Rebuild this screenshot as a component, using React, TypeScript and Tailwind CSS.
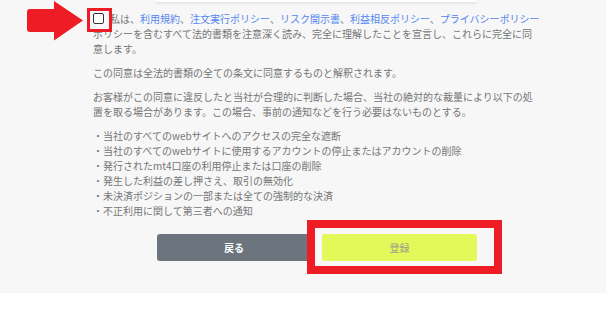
import React from 'react';

const links = ['利用規約', '注文実行ポリシー', 'リスク開示書', '利益相反ポリシー', 'プライバシーポリシー'];

const bullets = [
  '当社のすべてのwebサイトへのアクセスの完全な遮断',
  '当社のすべてのwebサイトに使用するアカウントの停止またはアカウントの削除',
  '発行されたmt4口座の利用停止または口座の削除',
  '発生した利益の差し押さえ、取引の無効化',
  '未決済ポジションの一部または全ての強制的な決済',
  '不正利用に関して第三者への通知',
];

const RedArrow: React.FC = () => (
  <svg width="57" height="41" viewBox="0 0 57 41" className="absolute left-[27px] top-[1px]">
    <path d="M3 8 H27 V0 L56 19.5 L27 39.5 V31 H3 Q0 31 0 28 V11 Q0 8 3 8 Z" fill="#ee1c25" />
  </svg>
);

export default function App() {
  return (
    <div className="w-full bg-white" style={{ fontFamily: '"Noto Sans CJK JP", "Noto Sans", sans-serif' }}>
      <div className="relative h-[293px] bg-[#f7f7f7] pt-[11px]">
        <div className="absolute left-[156px] top-0 h-[2px] w-[321px] bg-white shadow-[0_1px_3px_rgba(0,0,0,0.14)]" />

        <div className="ml-[93px] flex w-[447px] flex-col gap-[9px] text-[10px] leading-[15px] text-[#757575]">
          <p>
            <span className="mr-[6px] inline-block h-[11px] w-[11px] rounded-[2px] border-[1.5px] border-[#333] bg-white align-[-1px]" />
            私は、
            {links.map((l, i) => (
              <React.Fragment key={l}>
                <span className="text-[#5585f2]">{l}</span>
                {i < links.length - 1 && '、'}
              </React.Fragment>
            ))}
            ポリシーを含むすべて法的書類を注意深く読み、完全に理解したことを宣言し、これらに完全に同意します。
          </p>
          <p>この同意は全法的書類の全ての条文に同意するものと解釈されます。</p>
          <p>
            お客様がこの同意に違反したと当社が合理的に判断した場合、当社の絶対的な裁量により以下の処置を取る場合があります。この場合、事前の通知などを行う必要はないものとする。
          </p>
          <ul>
            {bullets.map((b) => (
              <li key={b}>・{b}</li>
            ))}
          </ul>
        </div>

        <div className="ml-[157px] mt-[16px] flex gap-[11px]">
          <button className="h-[27px] w-[154px] rounded-[3px] bg-[#6c757d] text-[10px] font-bold text-white">
            戻る
          </button>
          <button className="h-[27px] w-[155px] rounded-[3px] bg-[#e3f95a] text-[10px] text-[#9a9a8a]">
            登録
          </button>
        </div>

        <RedArrow />
        <div className="absolute left-[87px] top-[8px] h-[24px] w-[25px] border-[3px] border-[#ee1c25]" />
        <div className="absolute left-[307px] top-[220px] h-[54px] w-[195px] border-[8px] border-[#ee1c25]" />
      </div>
      <div className="h-[20px] bg-white" />
    </div>
  );
}
